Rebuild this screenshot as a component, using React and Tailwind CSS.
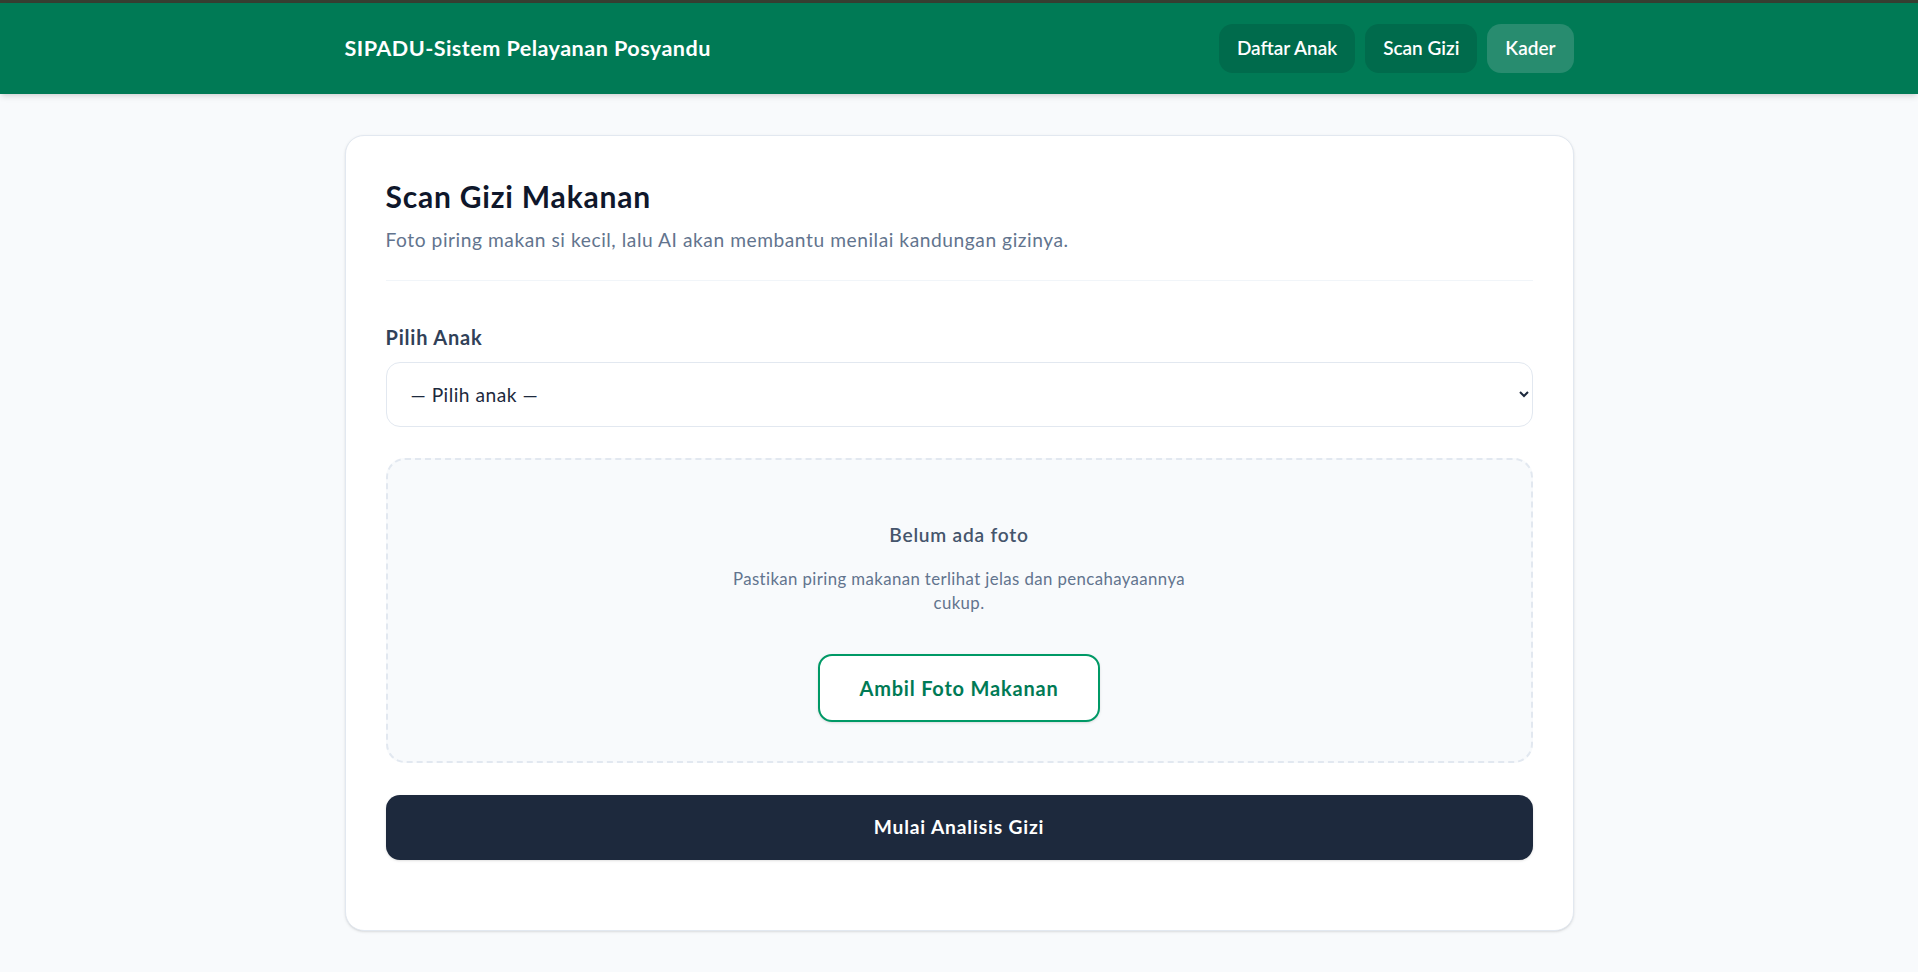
import React, { useState } from "react";

const children = [
    { id: 1, name: "Aisyah Putri" },
    { id: 2, name: "Bima Pratama" },
    { id: 3, name: "Citra Lestari" },
];

function NavButton({ label, active }) {
    return (
        <button
            className={`h-[49px] px-[18px] rounded-[14px] text-[19px] font-semibold text-white ${
                active ? "bg-[#288c6f]" : "bg-[#006b4c]"
            }`}
        >
            {label}
        </button>
    );
}

export default function App() {
    const [childId, setChildId] = useState("");

    return (
        <div className="min-h-screen bg-slate-50 font-['Lato','Liberation_Sans',sans-serif]">
            {/* top strip + header */}
            <div className="h-[3px] bg-[#363e31]" />
            <header className="bg-[#007a55] shadow-md">
                <div className="w-[1229px] mx-auto h-[91px] flex items-center justify-between">
                    <h1 className="text-[21.6px] font-bold tracking-[0.45px] text-white">SIPADU-Sistem Pelayanan Posyandu</h1>
                    <nav className="flex items-center gap-[10px]">
                        <NavButton label="Daftar Anak" />
                        <NavButton label="Scan Gizi" />
                        <NavButton label="Kader" active />
                    </nav>
                </div>
            </header>

            <main className="w-[1229px] mx-auto pt-[41px] pb-10">
                <div className="bg-white border border-slate-200 rounded-[19px] shadow-sm px-10 pt-[42px] pb-[70px]">
                    {/* Page heading */}
                    <div className="pb-[26px] border-b border-slate-100">
                        <h2 className="text-[30px] leading-[36px] font-bold tracking-[0.8px] text-slate-900">Scan Gizi Makanan</h2>
                        <p className="mt-[12px] text-[19.2px] leading-[28px] tracking-[0.55px] text-slate-500">
                            Foto piring makan si kecil, lalu AI akan membantu menilai kandungan gizinya.
                        </p>
                    </div>

                    {/* Child picker */}
                    <label className="block mt-[42px] text-[20px] leading-[28px] font-bold tracking-[0.8px] text-slate-700">
                        Pilih Anak
                    </label>
                    <select
                        value={childId}
                        onChange={(e) => setChildId(e.target.value)}
                        className="mt-[11px] w-full h-[65px] pl-[20px] pr-[8px] bg-white border border-slate-200 rounded-[14px] text-[19.2px] tracking-[0.5px] text-slate-800"
                    >
                        <option value="">— Pilih anak —</option>
                        {children.map((c) => (
                            <option key={c.id} value={c.id}>{c.name}</option>
                        ))}
                    </select>

                    {/* Photo drop zone */}
                    <div className="mt-[31px] bg-slate-50 border-2 border-dashed border-slate-200 rounded-[19px] pt-[61px] pb-[39px] flex flex-col items-center text-center">
                        <p className="text-[19.2px] leading-[28px] font-semibold tracking-[0.75px] text-slate-600">Belum ada foto</p>
                        <p className="mt-[18px] max-w-[461px] text-[16.8px] leading-[24px] tracking-[0.4px] text-slate-500">
                            Pastikan piring makanan terlihat jelas dan pencahayaannya cukup.
                        </p>
                        <button className="mt-[39px] h-[68px] px-[39px] bg-white border-2 border-emerald-600 rounded-[14px] shadow-sm text-[20px] font-bold tracking-[0.8px] text-emerald-700">
                            Ambil Foto Makanan
                        </button>
                    </div>

                    <button className="mt-[32px] w-full h-[65px] bg-slate-800 rounded-[14px] shadow-sm text-[19.2px] font-bold tracking-[0.85px] text-white">
                        Mulai Analisis Gizi
                    </button>
                </div>
            </main>
        </div>
    );
}
